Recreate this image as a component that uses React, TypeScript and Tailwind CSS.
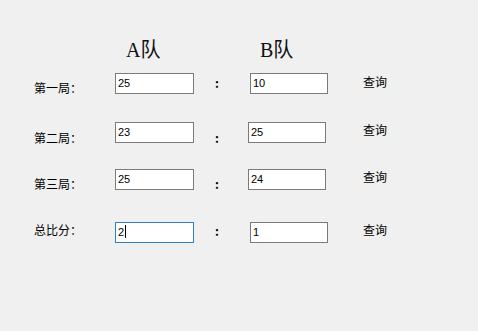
import React from "react";

type RowProps = {
    label: string;
    a: string;
    b: string;
    mt: string;
    labelMt: string;
    colonMt: string;
    queryMt: string;
    bGap: string;
    queryGap: string;
    focused?: boolean;
};

function TextBox({ value, focused, width }: { value: string; focused?: boolean; width: string }) {
    return (
        <div
            className={`${width} h-[21px] bg-white border pl-[2px] pt-[2px] text-[11px] leading-[14px] text-black flex items-start ${focused ? "border-[#2f7fc1]" : "border-[#7a7a7a]"}`}
            style={{ fontFamily: '"Liberation Sans", Arial, sans-serif' }}
        >
            <span>{value}</span>
            {focused && <span className="w-px h-[13px] bg-black ml-px" />}
        </div>
    );
}

function Row({ label, a, b, mt, labelMt, colonMt, queryMt, bGap, queryGap, focused }: RowProps) {
    return (
        <div className={`flex items-start h-[21px] pl-[34px] ${mt}`}>
            <span className={`w-[81px] text-[12px] leading-[16px] ${labelMt}`}>{label}</span>
            <TextBox value={a} focused={focused} width="w-[79px]" />
            <span className={`w-[8px] ml-[21px] text-[12px] leading-[16px] font-bold ${colonMt}`}>:</span>
            <div className={bGap} />
            <TextBox value={b} width="w-[78px]" />
            <span className={`${queryGap} text-[12px] leading-[16px] ${queryMt}`}>查询</span>
        </div>
    );
}

export default function App() {
    return (
        <div
            className="w-[478px] h-[331px] bg-[#f0f0f0] text-black overflow-hidden"
            style={{ fontFamily: '"Noto Sans CJK SC", "Liberation Sans", sans-serif' }}
        >
            {/* Headers */}
            <div
                className="flex pt-[38px] pl-[126px] h-[64px] text-[20px] leading-[24px] text-[#111]"
                style={{ fontFamily: '"Liberation Serif", "Noto Sans CJK SC", serif' }}
            >
                <span className="w-[134px]">A队</span>
                <span>B队</span>
            </div>

            <Row label="第一局：" a="25" b="10" mt="mt-[9px]" labelMt="mt-[7px]" colonMt="mt-[2px]" queryMt="mt-px" bGap="w-[27px]" queryGap="ml-[35px]" />
            <Row label="第二局：" a="23" b="25" mt="mt-[28px]" labelMt="mt-[8px]" colonMt="mt-[8px]" queryMt="mt-0" bGap="w-[25px]" queryGap="ml-[37px]" />
            <Row label="第三局：" a="25" b="24" mt="mt-[26px]" labelMt="mt-[7px]" colonMt="mt-[7px]" queryMt="mt-0" bGap="w-[25px]" queryGap="ml-[37px]" />
            <Row label="总比分：" a="2" b="1" mt="mt-[32px]" labelMt="mt-0" colonMt="mt-px" queryMt="mt-0" bGap="w-[27px]" queryGap="ml-[35px]" focused />
        </div>
    );
}
